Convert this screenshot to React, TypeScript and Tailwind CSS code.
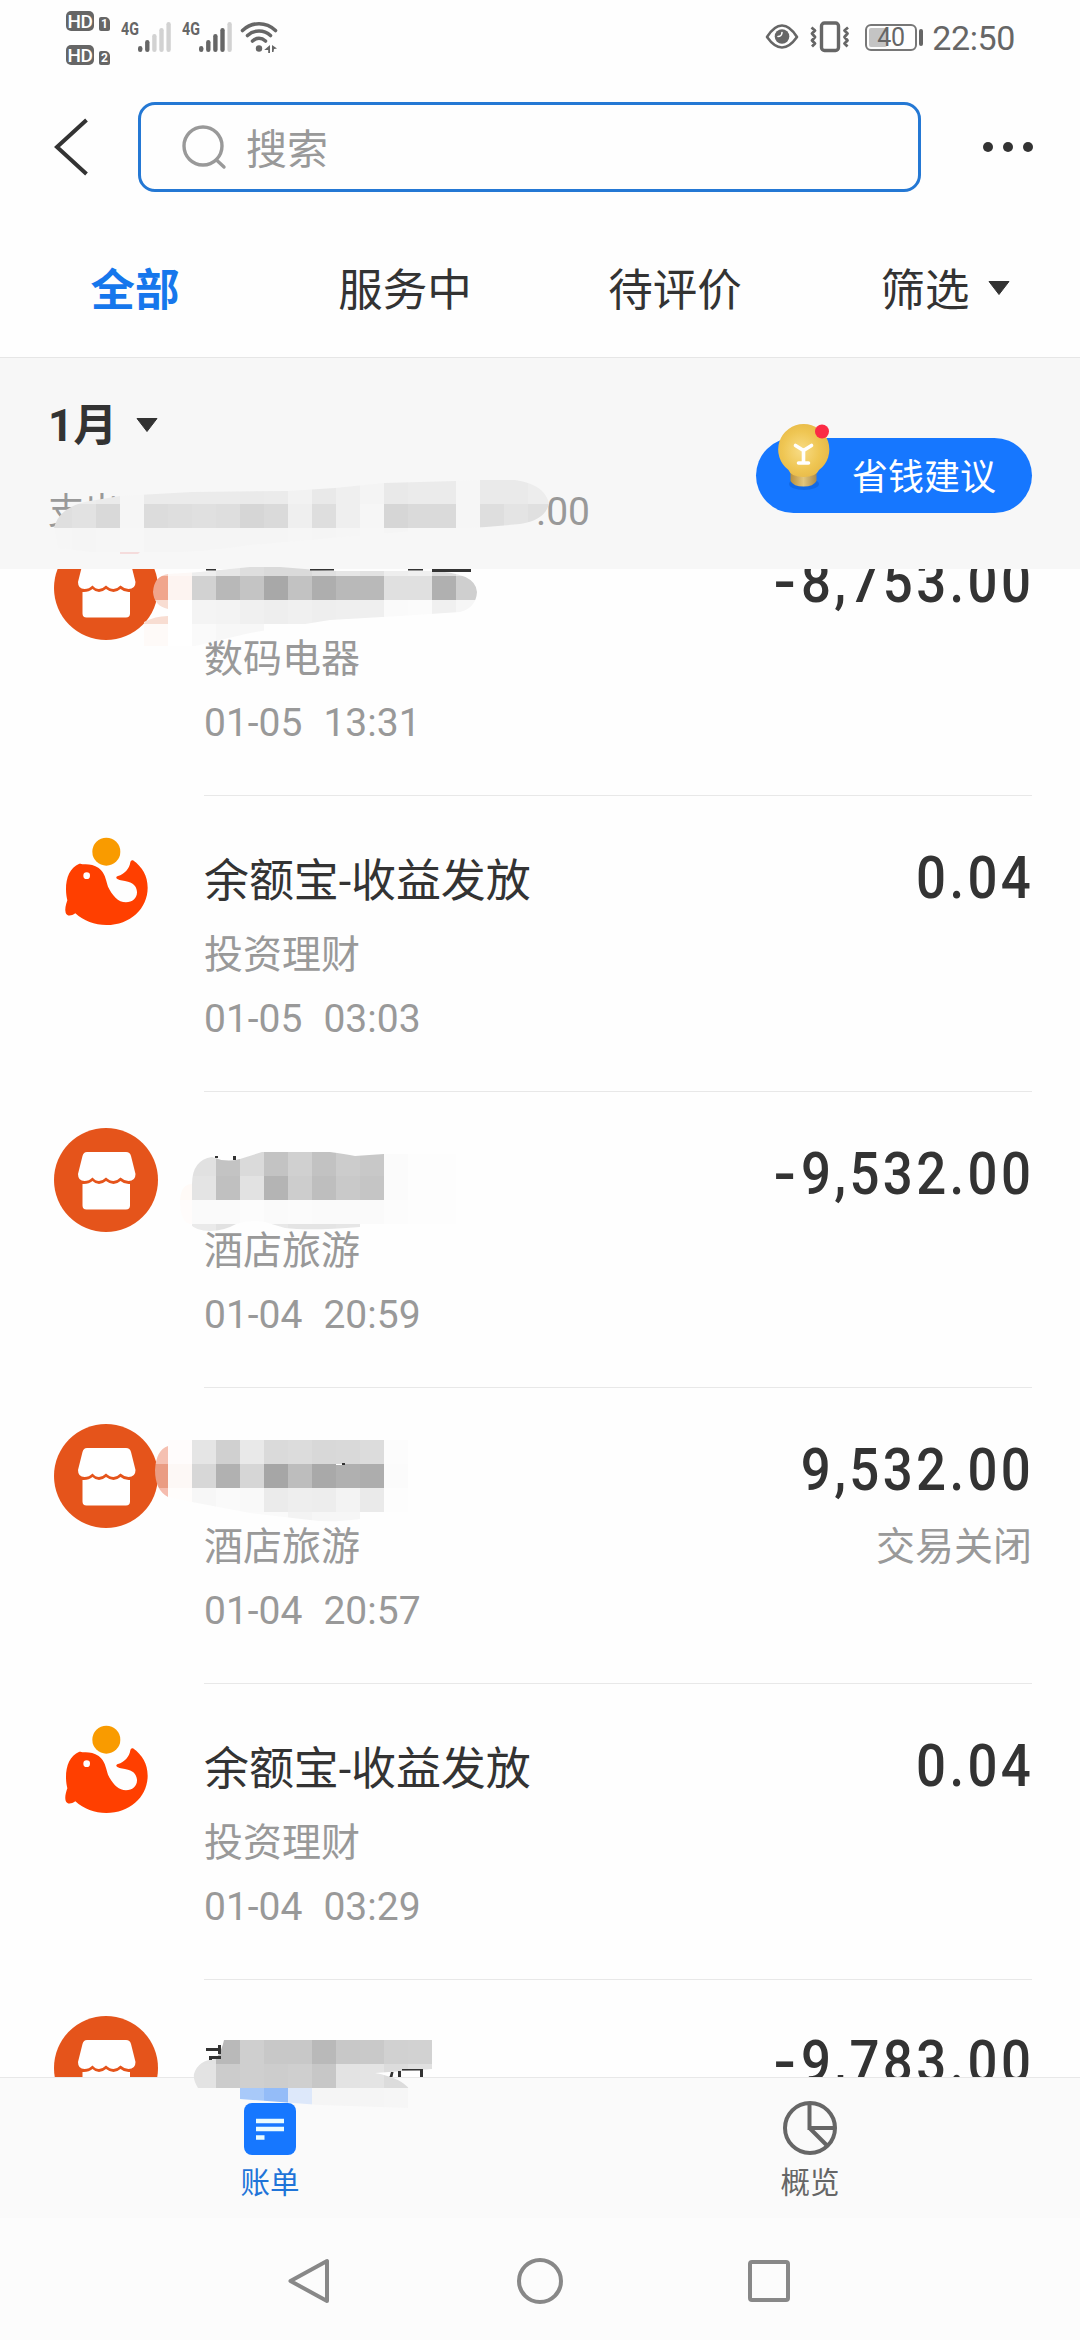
import React from "react";

interface Bill {
  id: number;
  icon: "shop" | "whale";
  title?: string;
  category: string;
  date: string;
  time: string;
  amount: string;
  status?: string;
}

const BILLS: Bill[] = [
  { id: 1, icon: "shop", category: "数码电器", date: "01-05", time: "13:31", amount: "-8,753.00" },
  { id: 2, icon: "whale", title: "余额宝-收益发放", category: "投资理财", date: "01-05", time: "03:03", amount: "0.04" },
  { id: 3, icon: "shop", category: "酒店旅游", date: "01-04", time: "20:59", amount: "-9,532.00" },
  { id: 4, icon: "shop", category: "酒店旅游", date: "01-04", time: "20:57", amount: "9,532.00", status: "交易关闭" },
  { id: 5, icon: "whale", title: "余额宝-收益发放", category: "投资理财", date: "01-04", time: "03:29", amount: "0.04" },
  { id: 6, icon: "shop", category: "", date: "", time: "", amount: "-9,783.00" },
];

function HdBadge({ sim }: { sim: string }) {
  return (
    <div className="flex h-5 items-end gap-[5px]">
      <div className="flex h-5 w-7 items-center justify-center rounded-[5px] bg-[#666] text-[19px] leading-none font-medium tracking-[-0.5px] text-white">
        HD
      </div>
      <div className="flex h-[14px] w-[11px] items-center justify-center rounded-[2px] rounded-tr-[5px] bg-[#666] text-[12px] leading-none font-bold text-white">
        {sim}
      </div>
    </div>
  );
}

function Signal({ level }: { level: number }) {
  const heights = [6, 12, 18, 24, 30];
  return (
    <svg width="33" height="30" viewBox="0 0 33 30">
      {heights.map((h, i) => (
        <rect key={h} x={i * 7.1} y={30 - h} width="4.4" height={h} rx="2.2" fill={i < level ? "#666" : "#d2d2d2"} />
      ))}
    </svg>
  );
}

function StatusBar() {
  return (
    <div className="flex h-[80px] shrink-0 justify-between pr-[65px] pl-[66px] text-[#666]">
      <div className="flex">
        <div className="flex flex-col gap-[14px] pt-[11px]">
          <HdBadge sim="1" />
          <HdBadge sim="2" />
        </div>
        <span className="mt-[21px] ml-[11px] w-[17px] origin-left scale-x-75 text-[19px] leading-[15px] font-bold">4G</span>
        <div className="mt-[22px]">
          <Signal level={2} />
        </div>
        <span className="mt-[21px] ml-[11px] w-[17px] origin-left scale-x-75 text-[19px] leading-[15px] font-bold">4G</span>
        <div className="mt-[22px]">
          <Signal level={4} />
        </div>
        <svg className="mt-[20px] ml-[8px]" width="40" height="36" viewBox="0 0 40 36" fill="none">
          <g stroke="#666" strokeWidth="3.6" strokeLinecap="round">
            <path d="M2.5 10.5C12 1.5 26 1.5 35.500 10.500" />
            <path d="M7.500 15.500C14 9.500 24 9.500 30.500 15.500" />
            <path d="M12.500 21C16.500 17.500 21.500 17.500 25.500 21" />
          </g>
          <circle cx="19" cy="28.500" r="3.200" fill="#666" />
          <path d="M30 25v8h-1.800v-3h-4zM32 25l5 3.500-3 .5-.5 3H32z" fill="#666" />
        </svg>
      </div>

      <div className="flex">
        <svg className="mt-[23px]" width="34" height="28" viewBox="0 0 34 28" fill="none">
          <path d="M2 14C7 6 12 2.500 17 2.500S27 6 32 14C27 21 22 24.500 17 24.500S7 21 2 14Z" stroke="#666" strokeWidth="2.600" strokeLinejoin="round" />
          <circle cx="17" cy="13.500" r="7.300" fill="#666" />
          <path d="M17 9.500a4 4 0 0 1-4 4" stroke="#fff" strokeWidth="1.600" strokeLinecap="round" />
        </svg>
        <svg className="mt-[21px] ml-[10px]" width="42" height="32" viewBox="0 0 42 32" fill="none" stroke="#666">
          <rect x="12.500" y="2" width="17" height="27.500" rx="3" strokeWidth="3.400" />
          <path d="M2.500 6.500l3.500 3-3 3 3 3.500-3 3.500 3 3-3 3M39 6.500l-3.500 3 3 3-3 3.500 3 3.500-3 3 3 3" strokeWidth="2.800" strokeLinejoin="round" />
        </svg>
        <div className="mt-[24px] ml-[14px] flex h-[27px] w-[52px] items-center rounded-[6px] border-2 border-[#777] p-[2px]">
          <div className="h-[19px] w-[18px] rounded-[2px] bg-[#c4c4c4]" />
          <span className="-ml-[10px] text-[25px] leading-none tracking-[-0.5px]">40</span>
        </div>
        <div className="mt-[29px] ml-[2px] h-[17px] w-1 rounded-full bg-[#666]" />
        <span className="mt-[18px] ml-[9px] text-[34px] leading-[40px] tracking-[-0.4px]">22:50</span>
      </div>
    </div>
  );
}

function SearchHeader() {
  return (
    <div className="flex h-[134px] shrink-0 items-start pt-[22px] text-[#333]">
      <svg className="mt-[15px] ml-[52px]" width="40" height="60" viewBox="0 0 40 60" fill="none">
        <path d="M34.500 3L5 30l29.500 27" stroke="#333" strokeWidth="4" />
      </svg>
      <div className="ml-[46px] flex h-[90px] w-[783px] items-center rounded-[17px] border-3 border-[#2478d4] pl-[40px]">
        <svg width="46" height="46" viewBox="0 0 46 46" fill="none" stroke="#999" strokeWidth="3.400" strokeLinecap="round">
          <circle cx="22" cy="22" r="19" />
          <path d="M35.500 36l7.500 7" />
        </svg>
        <span className="ml-[19px] pt-[5px] text-[41px] leading-[60px] text-[#999]">搜索</span>
      </div>
      <div className="mt-[40px] ml-[62px] flex gap-[10px]">
        <i className="size-[10px] rounded-full bg-[#333]" />
        <i className="size-[10px] rounded-full bg-[#333]" />
        <i className="size-[10px] rounded-full bg-[#333]" />
      </div>
    </div>
  );
}

function Caret() {
  return (
    <svg width="22" height="14" viewBox="0 0 22 14">
      <path d="M1 .5h20L11 13.500z" fill="#333" stroke="#333" strokeLinejoin="round" />
    </svg>
  );
}

function FilterTabs() {
  return (
    <div className="grid h-[144px] shrink-0 grid-cols-4 items-center border-b border-[#e6e6e6] text-[44.5px] leading-[64px] text-[#333]">
      <span className="pt-[10px] text-center font-bold text-[#1677ec]">全部</span>
      <span className="pt-[10px] text-center">服务中</span>
      <span className="pt-[10px] text-center">待评价</span>
      <span className="flex items-center justify-center gap-[18px]">
        <span className="pt-[10px]">筛选</span>
        <span className="flex pt-[4px]">
          <Caret />
        </span>
      </span>
    </div>
  );
}

function Bulb() {
  return (
    <svg className="absolute -top-[16px] left-[18px]" width="60" height="72" viewBox="0 0 60 72">
      <defs>
        <radialGradient id="glass" cx="0.45" cy="0.5" r="0.6">
          <stop offset="0" stopColor="#f8dc86" />
          <stop offset="0.6" stopColor="#efc653" />
          <stop offset="1" stopColor="#e6b746" />
        </radialGradient>
        <linearGradient id="cap" x1="0" x2="1">
          <stop offset="0" stopColor="#b98f3c" />
          <stop offset="0.5" stopColor="#e2c67c" />
          <stop offset="1" stopColor="#a98a4d" />
        </linearGradient>
      </defs>
      <ellipse cx="30" cy="62" rx="15" ry="6" fill="#0d5fd6" opacity="0.55" />
      <path d="M16.500 50h26v9q-3 5.500-13 5.500t-13-5.500z" fill="url(#cap)" />
      <path d="M29.500 2a25.500 25.500 0 0 1 15.500 46q-3 7-15.500 7t-15-7A25.500 25.500 0 0 1 29.500 2z" fill="url(#glass)" />
      <path d="M21.500 23.500l8 5 8-5M29.500 28v13M24.500 41h10" stroke="#fff" strokeWidth="3.600" strokeLinecap="round" strokeLinejoin="round" fill="none" />
      <circle cx="48" cy="9.500" r="7" fill="#fb2b45" />
    </svg>
  );
}

function MonthSummary() {
  return (
    <div className="flex h-[211px] shrink-0 justify-between bg-[#f7f7f7] pr-[48px] pl-[48px]">
      <div className="flex flex-col">
        <div className="mt-[35px] flex items-center gap-[19px] text-[44px] leading-[60px] font-bold text-[#333]">
          <span className="pt-[3px]">1月</span>
          <Caret />
        </div>
        <div className="mt-[31px] flex w-[542px] justify-between text-[39px] leading-[50px] text-[#999]">
          <span className="text-[36px]">支出</span>
          <span>.00</span>
        </div>
      </div>
      <div className="relative mt-[80px] flex h-[75px] w-[276px] items-center rounded-full bg-[#1677ff] pt-[5px] pl-[96px] text-[36px] text-white">
        <Bulb />
        省钱建议
      </div>
    </div>
  );
}

function ShopIcon() {
  return (
    <svg width="104" height="104" viewBox="0 0 104 104">
      <circle cx="52" cy="52" r="52" fill="#e5541b" />
      <path d="M33 24h39q4 0 5 4l4.500 18q0 7-7 7-4 0-8-3.500-3.500 3.500-7 3.500t-7.500-3.500Q48.500 53 45 53t-6.500-3.500Q35 53 30.500 53 24 53 24 46l4.500-18q1-4 4.500-4z" fill="#fff" />
      <path d="M28.500 56q6 .5 10-3 3 3 6.500 3t7-3q4 3 7.500 3t7-3q4 3.500 9.500 3v21.500q0 4-4 4H32.500q-4 0-4-4z" fill="#fff" />
    </svg>
  );
}

function WhaleIcon() {
  return (
    <svg width="104" height="104" viewBox="42 36 312 312">
      <circle cx="199" cy="95" r="42" fill="#f99b00" />
      <path
        d="M118 131C90 143 78 172 78 208c0 14 2 24 4 33-5 14-8 28-5 37 3 10 15 12 29 2 25 23 58 35 93 35 72 0 124-50 124-112 0-36-16-62-44-82-4-1-7 1-8 6-3 20-18 36-37 41-6 2-7 6-2 9 8 5 20 5 32 8 20 5 27 19 27 32 0 18-14 30-33 30-24 0-42-22-54-47-8-24-8-40-28-56-16-12-35-12-49-11-4-2-6-2-9-2z"
        fill="#ff3f00"
      />
      <circle cx="140" cy="167" r="10" fill="#fff" />
    </svg>
  );
}

function Amount({ value }: { value: string }) {
  const negative = value.startsWith("-");
  return (
    <div className="-mr-[2px] flex h-[72px] origin-right scale-x-88 text-[60px] leading-[72px] font-medium tracking-[3.8px] text-[#333]">
      {negative && <span className="mr-[1px] inline-block origin-right scale-x-125">-</span>}
      <span>{negative ? value.slice(1) : value}</span>
    </div>
  );
}

function BillRow({ bill }: { bill: Bill }) {
  return (
    <div className="flex h-[296px] shrink-0 pl-[54px]">
      <div className="mt-[36px] w-[104px]">{bill.icon === "shop" ? <ShopIcon /> : <WhaleIcon />}</div>
      <div className="mr-[48px] ml-[46px] flex flex-1 justify-between border-b border-[#e8e8e8]">
        <div className="flex flex-col pt-[56px]">
          <div className="h-[60px] text-[45px] leading-[60px] tracking-[-0.1px] text-[#333]">{bill.title}</div>
          <div className="mt-[13px] h-[60px] text-[39px] leading-[60px] text-[#999]">{bill.category}</div>
          <div className="mt-[4px] flex h-[60px] gap-[21px] text-[39px] leading-[60px] text-[#999]">
            <span>{bill.date}</span>
            <span>{bill.time}</span>
          </div>
        </div>
        <div className="flex flex-col items-end pt-[46px]">
          <Amount value={bill.amount} />
          <div className="mt-[11px] text-[39px] leading-[60px] text-[#999]">{bill.status}</div>
        </div>
      </div>
    </div>
  );
}

function BottomTabs() {
  return (
    <div className="grid h-[141px] shrink-0 grid-cols-2 border-t border-[#e8e8e8] bg-[#fafafa] text-[29.5px] leading-[40px]">
      <div className="flex flex-col items-center pt-[25px] text-[#1f74d8]">
        <svg width="52" height="52" viewBox="0 0 52 52">
          <rect width="52" height="52" rx="8" fill="#1677ff" />
          <path d="M12 18h28M12 26h28M12 34.500h8.500" stroke="#e9fbff" strokeWidth="4.300" />
        </svg>
        <span className="mt-[8px]">账单</span>
      </div>
      <div className="flex flex-col items-center pt-[23px] text-[#666]">
        <svg width="54" height="54" viewBox="0 0 54 54" fill="none" stroke="#666" strokeWidth="4">
          <circle cx="27" cy="27" r="25" />
          <path d="M26.500 2v25H52M26.500 27L44 44.500" />
        </svg>
        <span className="mt-[8px]">概览</span>
      </div>
    </div>
  );
}

function SystemNav() {
  return (
    <div className="flex h-[122px] shrink-0 items-start bg-[#fcfcfc] pt-[38px] pl-[286px]">
      <svg width="46" height="50" viewBox="0 0 46 50" fill="none">
        <path d="M41 5v40L4.500 25z" stroke="#888" strokeWidth="4" strokeLinejoin="round" />
      </svg>
      <div className="mt-[2px] ml-[185px] size-[46px] rounded-full border-4 border-[#888]" />
      <div className="mt-[4px] ml-[185px] size-[42px] rounded-[4px] border-4 border-[#888]" />
    </div>
  );
}

// Privacy mosaic: blocks of 24px, each row starts at column x.
const CELL = 24;

interface Smudge {
  id: string;
  shape: string;
  rows: { x: number; y: number; colors: string[] }[];
}

const SMUDGES: Smudge[] = [
  {
    id: "summary",
    shape:
      "M54 528C58 512 72 503 96 500L120 496 192 492 288 491 335 488 384 483 456 481 480 480H515Q544 484 549 503 546 520 520 524L486 527 400 532 250 545Q180 556 100 553L58 548Z",
    rows: [
      { x: 48, y: 480, colors: ["#ededed", "#ededed", "#ebebeb", "#f6f6f6", "#ebebeb", "#ebebeb", "#ebebeb", "#ebebeb", "#eaeaea", "#ebebeb", "#f2f2f2", "#e9e9e9", "#efefef", "#f4f4f4", "#e9e9e9", "#ebebeb", "#ebebeb", "#f6f6f6", "#eaeaea", "#eaeaea", "#ededed"] },
      { x: 48, y: 504, colors: ["#dfdfdf", "#e2e2e2", "#d9d9d9", "#f6f6f6", "#dcdcdc", "#dedede", "#e0e0e0", "#dedede", "#d6d6d6", "#dadada", "#efefef", "#dedede", "#efefef", "#f6f6f6", "#d6d6d6", "#dadada", "#dadada", "#f6f6f6", "#dedede", "#e4e4e4", "#e0e0e0"] },
      { x: 48, y: 528, colors: ["#f6f6f6", "#f5f5f5", "#f6f6f6", "#f7f7f7", "#f5f5f5", "#f5f5f5", "#f5f5f5", "#f5f5f5", "#f5f5f5", "#f5f5f5", "#f6f6f6", "#f5f5f5", "#f6f6f6", "#f7f7f7", "#f5f5f5"] },
    ],
  },
  {
    id: "digital",
    shape:
      "M168 574L200 572 250 567H280L330 571H430Q476 572 477 592 476 608 460 612L400 616 330 620 250 633 195 646H144V622Q155 616 168 616V609Q154 606 153 592 154 576 168 574Z",
    rows: [
      { x: 144, y: 552, colors: ["#f6cfc2", "#fdf8f6", "#eeeeee", "#e6e6e6", "#dedede", "#dadada", "#dadada", "#e0e0e0", "#e6e6e6", "#e2e2e2", "#eeeeee", "#f0f0f0", "#dcdcdc", "#e8e8e8"] },
      { x: 144, y: 576, colors: ["#f0a58c", "#fdf4f1", "#d2d2d2", "#b8b8b8", "#c4c4c4", "#a8a8a8", "#c2c2c2", "#aeaeae", "#b9b9b9", "#b9b9b9", "#e0e0e0", "#e0e0e0", "#b0b0b0", "#cfcfcf"] },
      { x: 144, y: 600, colors: ["#f8ddd2", "#ffffff", "#f4f4f4", "#f3f3f3", "#f0f0f0", "#eeeeee", "#f0f0f0", "#eeeeee", "#efefef", "#efefef", "#fafafa", "#fbfbfb", "#f0f0f0", "#f6f6f6"] },
      { x: 144, y: 624, colors: ["#fefaf8", "#ffffff", "#fafafa", "#f7f7f7", "#f7f7f7"] },
    ],
  },
  {
    id: "hotel-a",
    shape:
      "M180 1200Q181 1184 192 1184 192 1160 212 1157 226 1163 240 1159L262 1152H330Q345 1154 355 1156L384 1154H460V1225H360V1227Q310 1231 285 1228L265 1222Q250 1219 236 1224 224 1231 210 1231 196 1231 190 1224 180 1222 180 1200Z",
    rows: [
      { x: 168, y: 1152, colors: ["#fffcfa", "#e1e1e1", "#c3c3c3", "#dadada", "#c3c3c3", "#d0d0d0", "#c2c2c2", "#cccccc", "#c8c8c8", "#fbfbfb", "#fdfdfd", "#fdfdfd"] },
      { x: 168, y: 1176, colors: ["#fffaf7", "#e4e4e4", "#c0c0c0", "#e2e2e2", "#b4b4b4", "#cdcdcd", "#bebebe", "#c9c9c9", "#c5c5c5", "#fbfbfb", "#fdfdfd", "#fdfdfd"] },
      { x: 168, y: 1200, colors: ["#fffcfb", "#fafafa", "#fafafa", "#fcfcfc", "#fafafa", "#fbfbfb", "#fafafa", "#fafafa", "#fafafa", "#fcfcfc", "#fdfdfd", "#fdfdfd"] },
      { x: 168, y: 1224, colors: ["#ffffff", "#eaeaea", "#e2e2e2", "#efefef", "#e8e8e8", "#e4e4e4", "#e4e4e4", "#e6e6e6"] },
    ],
  },
  {
    id: "hotel-b",
    shape: "M168 1440H408V1512H360V1519Q330 1523 310 1520L250 1513 192 1502 168 1497Q155 1490 155 1470 156 1450 168 1446Z",
    rows: [
      { x: 144, y: 1440, colors: ["#f5c0b1", "#fffcfc", "#e5e5e5", "#d0d0d0", "#e9e9e9", "#dadada", "#dcdcdc", "#d8d8d8", "#d9d9d9", "#dcdcdc", "#fcfcfc"] },
      { x: 144, y: 1464, colors: ["#ea9c83", "#fdf8f6", "#d7d7d7", "#b1b1b1", "#d6d6d6", "#a6a6a6", "#bdbdbd", "#a9a9a9", "#b0b0b0", "#adadad", "#fbfbfb"] },
      { x: 144, y: 1488, colors: ["#f5bcae", "#fffdfc", "#f7f7f7", "#fafafa", "#f9f9f9", "#ebebeb", "#eeeeee", "#ededed", "#f3f3f3", "#eaeaea", "#fdfdfd"] },
      { x: 216, y: 1512, colors: ["#fcfcfc", "#fafafa", "#fafafa", "#f3f3f3", "#f6f6f6", "#f6f6f6"] },
    ],
  },
  {
    id: "last",
    shape:
      "M224 2040H432V2069L375 2073Q402 2078 410 2090V2108L320 2105 240 2099V2088H198Q193 2080 194 2074 198 2060 216 2059 222 2050 224 2040Z",
    rows: [
      { x: 192, y: 2040, colors: ["#e2e2e2", "#b9b9b9", "#cfcfcf", "#c8c8c8", "#c8c8c8", "#b9b9b9", "#c8c8c8", "#c9c9c9", "#d1d1d1", "#d2d2d2"] },
      { x: 192, y: 2064, colors: ["#e3e3e3", "#cccccc", "#cfcfcf", "#cdcdcd", "#cfcfcf", "#c7c7c7", "#e3e3e3", "#e4e4e4", "#dcdcdc", "#e0e0e0"] },
      { x: 240, y: 2088, colors: ["#a8c9f9", "#94bcf8", "#dde8fa", "#f5f5f5", "#f5f5f5", "#f5f5f5", "#f6f6f6"] },
    ],
  },
];

function SmudgeLayer() {
  return (
    <svg className="pointer-events-none absolute inset-0" width="1080" height="2340" viewBox="0 0 1080 2340">
      {SMUDGES.map((s) => (
        <g key={s.id}>
          <clipPath id={s.id}>
            <path d={s.shape} />
          </clipPath>
          <g clipPath={`url(#${s.id})`}>
            {s.rows.map((row) =>
              row.colors.map((color, i) => (
                <rect key={`${row.y}-${i}`} x={row.x + i * CELL} y={row.y} width={CELL} height={CELL} fill={color} />
              )),
            )}
          </g>
        </g>
      ))}
      {/* strokes of the hidden titles that stick out from the mosaic */}
      <path d="M432 569h39v3h-39zM310 569h24v1.500h-24zM206 569h10v1.500h-10zM408 569h15v1.500h-15z" fill="#333" />
      <path d="M215 1156h3v2h-3zM233 1156h3v4h-3z" fill="#333" />
      <path d="M206 2048h15v3h-15zM218 2045h3v9h-3zM209 2056h12v3h-12zM209 2056h3v4h-3z" fill="#333" />
      <path d="M391 2072h2.500l-1 5h-3zM398 2071h3v6h-3zM402 2069h20v1.500h-20zM420 2069h3v8h-3z" fill="#333" />
      <path d="M120 552h20l-2 2h-18z" fill="#f5dcdc" />
      <path d="M336 1464h9v1h-9z" fill="#fff" />
      <path d="M342 1463h3v2h-3z" fill="#333" />
    </svg>
  );
}

export default function App() {
  return (
    <div className="relative flex h-[2340px] w-[1080px] flex-col overflow-hidden bg-[#fefefe] font-['Roboto','Noto_Sans_CJK_SC',sans-serif]">
      <StatusBar />
      <SearchHeader />
      <FilterTabs />
      <MonthSummary />
      <main className="h-[1508px] shrink-0 overflow-hidden">
        <div className="-mt-[69px] flex flex-col">
          {BILLS.map((bill) => (
            <BillRow key={bill.id} bill={bill} />
          ))}
        </div>
      </main>
      <BottomTabs />
      <SystemNav />
      <SmudgeLayer />
    </div>
  );
}
